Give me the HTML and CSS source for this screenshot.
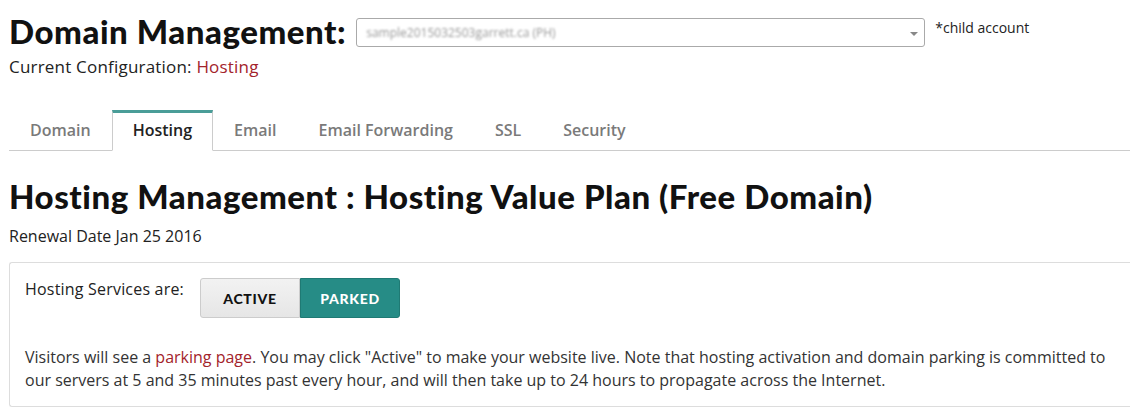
FILE: index.html
```html
<!DOCTYPE html>
<html>
<head>
<meta charset="utf-8">
<link rel="stylesheet" href="styles.css">
</head>
<body>
<div class="page">
  <div class="top-row">
    <h1 class="title">Domain Management:</h1>
    <div class="select">
      <span class="select-text">sample2015032503garrett.ca (PH)</span>
      <span class="caret"></span>
    </div>
    <span class="child">*child account</span>
  </div>
  <div class="config">Current Configuration: <span class="red">Hosting</span></div>

  <ul class="tabs">
    <li class="tab">Domain</li>
    <li class="tab active">Hosting</li>
    <li class="tab">Email</li>
    <li class="tab">Email Forwarding</li>
    <li class="tab">SSL</li>
    <li class="tab">Security</li>
  </ul>

  <h2 class="title section-title">Hosting Management : Hosting Value Plan (Free Domain)</h2>
  <div class="renewal">Renewal Date Jan 25 2016</div>

  <div class="panel">
    <div class="status-row">
      <span class="status-label">Hosting Services are:</span>
      <div class="btn-group">
        <span class="btn">ACTIVE</span>
        <span class="btn on">PARKED</span>
      </div>
    </div>
    <p class="note">Visitors will see a <span class="red">parking page</span>. You may click "Active" to make your website live. Note that hosting activation and domain parking is committed to our servers at 5 and 35 minutes past every hour, and will then take up to 24 hours to propagate across the Internet.</p>
  </div>
</div>
</body>
</html>
```

FILE: styles.css
```css
html, body {
  margin: 0;
  padding: 0;
  background: #fff;
}
body {
  font-family: "Open Sans", "Liberation Sans", sans-serif;
  color: #222;
  font-size: 16px;
  overflow: hidden;
}
.page {
  padding: 0 0 0 9px;
}
.top-row {
  display: flex;
  align-items: flex-start;
  padding-top: 12px;
  height: 38px;
}
.title {
  font-family: "Lato", "DejaVu Sans", sans-serif;
  font-weight: 900;
  font-size: 33px;
  line-height: 38px;
  margin: 0;
  color: #111;
  letter-spacing: 0.55px;
}
.select {
  margin-left: 10px;
  margin-top: 6px;
  width: 567px;
  height: 27px;
  border: 1px solid #aaa;
  border-radius: 3px;
  display: flex;
  align-items: center;
  position: relative;
}
.select-text {
  margin-left: 9px;
  font-size: 12px;
  color: #999;
  filter: blur(1.3px);
}
.caret {
  position: absolute;
  right: 6px;
  top: 13px;
  width: 0;
  height: 0;
  border-left: 4px solid transparent;
  border-right: 4px solid transparent;
  border-top: 4px solid #888;
}
.child {
  margin-left: 10px;
  margin-top: 6px;
  font-size: 14px;
  color: #222;
}
.config {
  margin-top: 6px;
  font-size: 17px;
  line-height: 22px;
  letter-spacing: 0.2px;
  color: #222;
}
.red {
  color: #a3232b;
}
.tabs {
  list-style: none;
  margin: 32px 0 0 0;
  padding: 0;
  display: flex;
  border-bottom: 1px solid #ccc;
  height: 40px;
}
.tab {
  padding: 0 20px;
  font-size: 16px;
  font-weight: 600;
  color: #7a7a7a;
  line-height: 35px;
  border: 1px solid transparent;
  border-top: 3px solid transparent;
  height: 37px;
}
.tab.active {
  color: #222;
  border-color: #ccc;
  border-top-color: #4a9d98;
  border-bottom: 1px solid #fff;
  background: #fff;
}
.section-title {
  margin-top: 26px;
}
.renewal {
  margin-top: 10px;
  line-height: 22px;
}
.panel {
  margin-top: 15px;
  border: 1px solid #ddd;
  border-right: none;
  border-radius: 3px 0 0 3px;
  padding: 15px 16px 14px 15px;
}
.status-row {
  display: flex;
  align-items: flex-start;
}
.status-label {
  line-height: 22px;
  width: 175px;
  letter-spacing: 0.2px;
}
.btn-group {
  display: flex;
}
.btn {
  width: 100px;
  height: 40px;
  box-sizing: border-box;
  display: flex;
  align-items: center;
  justify-content: center;
  font-family: "Lato", "DejaVu Sans", sans-serif;
  font-weight: 900;
  font-size: 14px;
  letter-spacing: 0.7px;
  border: 1px solid #ccc;
  background: linear-gradient(#f2f2f2, #e6e6e6);
  color: #111;
  border-radius: 3px 0 0 3px;
}
.btn.on {
  background: #268c86;
  border-color: #1f7a74;
  color: #fff;
  border-radius: 0 3px 3px 0;
}
.note {
  margin: 28px 0 0 0;
  line-height: 23px;
  color: #333;
}
```
